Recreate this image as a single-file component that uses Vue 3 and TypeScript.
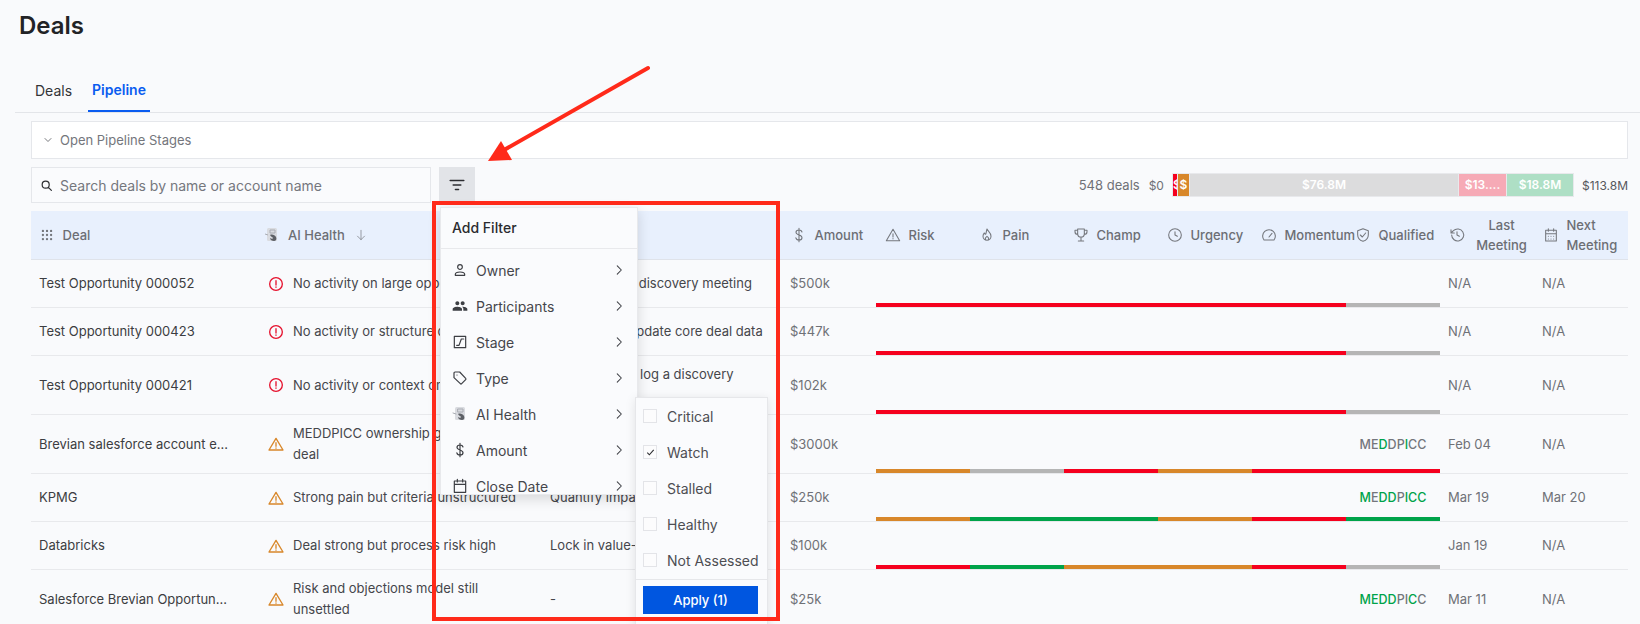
<script setup lang="ts">
const icons: Record<string, string> = {
  search: 'M10.5 4a6.5 6.5 0 1 0 0 13a6.5 6.5 0 0 0 0-13zM15.5 15.5L21 21',
  filter: 'M3 6h18M7 12h10M10 18h4',
  grip: 'M5 5h.01M12 5h.01M19 5h.01M5 12h.01M12 12h.01M19 12h.01M5 19h.01M12 19h.01M19 19h.01',
  sort: 'M12 4v16M6 14l6 6 6-6',
  dollar: 'M16.5 7.5C16 5.5 14 4.5 12 4.5 9.500 4.500 7.500 6 7.500 8c0 5 9 3 9 8 0 2-2 3.500-4.500 3.500-2.200 0-4.200-1-4.700-3.200M12 2v20',
  risk: 'M12 3.500L22 20.500H2ZM12 10v5M12 17.300v.5',
  pain: 'M12 3c1 3 6 5 6 11a6 6 0 0 1-12 0c0-2 1-4 2-5 .5 1 1 2 2 2 1-2 1-5 2-8zM12 20a2.500 2.500 0 0 1-2.500-2.500c0-2 2.500-3.500 2.500-3.500s2.500 1.500 2.500 3.500A2.500 2.500 0 0 1 12 20z',
  champ: 'M7 3h10v7a5 5 0 0 1-10 0zM7 5H3v2a4 4 0 0 0 4 4M17 5h4v2a4 4 0 0 1-4 4M12 15v5M8 21h8',
  clock: 'M12 2.500a9.500 9.500 0 1 0 0 19a9.500 9.500 0 0 0 0-19zM12 7v5l3.500 2',
  gauge: 'M4.500 19.500a9.500 9.500 0 1 1 15 0zM12 15l4.500-5.500',
  shield: 'M12 2.500l8 3v6c0 5-3.500 8.500-8 10-4.500-1.500-8-5-8-10v-6zM8 12l3 3 5-6',
  history: 'M4 12a9 9 0 1 0 2.600-6.400L3 9M3 4v5h5M12 7v5l3.500 2',
  calDots: 'M4 5h16v16H4zM4 10h16M8 2.500v4M16 2.500v4M8 14h.01M12 14h.01M16 14h.01M8 18h.01M12 18h.01M16 18h.01',
  person: 'M12 4a3.500 3.500 0 1 0 0 7a3.500 3.500 0 0 0 0-7zM5 20v-1.500c0-2 3-3.500 7-3.500s7 1.500 7 3.500V20z',
  stage: 'M3.500 3.500h17v17h-17zM7 17h3.500l3.500-9.500h3.500',
  tag: 'M3 4.500c0-.8.7-1.500 1.500-1.500h7l9 9.500c.6.6.6 1.400 0 2l-6 6c-.6.6-1.400.6-2 0L3 11.500zM7.500 7.500h.01',
  calendar: 'M3.500 4.500h17v17h-17zM3.500 9.500h17M8 2v4M16 2v4',
  right: 'M9 5l7 7-7 7',
  down: 'M6 9l6 6 6-6',
  critical: 'M12 2.500a9.500 9.500 0 1 0 0 19a9.500 9.500 0 0 0 0-19zM12 7v6.500M12 16.500v.5',
  watch: 'M12 3.500L22.500 21h-21zM12 10v5.500M12 18v.3',
  check: 'M5 12.500l4.500 4.500L19 6.500',
}
const group = 'M16 11c1.660 0 2.990-1.340 2.990-3S17.660 5 16 5c-1.660 0-3 1.340-3 3s1.340 3 3 3zm-8 0c1.660 0 2.990-1.340 2.990-3S9.660 5 8 5C6.340 5 5 6.340 5 8s1.340 3 3 3zm0 2c-2.330 0-7 1.170-7 3.500V19h14v-2.500c0-2.330-4.670-3.500-7-3.500zm8 0c-.290 0-.620.020-.970.050 1.160.840 1.970 1.970 1.970 3.450V19h6v-2.500c0-2.330-4.670-3.500-7-3.500z'

const R = '#f5001e', O = '#d8872a', G = '#00a34a', N = '#b5b5b5'

const metrics = [
  { icon: 'risk', label: 'Risk' },
  { icon: 'pain', label: 'Pain' },
  { icon: 'champ', label: 'Champ' },
  { icon: 'clock', label: 'Urgency' },
  { icon: 'gauge', label: 'Momentum' },
  { icon: 'shield', label: 'Qualified' },
]

interface Row {
  deal: string; health: 'critical' | 'watch'; reason: string; next: string; amount: string
  bars: [string, number][]; green: number[]; last: string; nextMeeting: string; tall: boolean
}
const rows: Row[] = [
  { deal: 'Test Opportunity 000052', health: 'critical', reason: 'No activity on large opportunity', next: 'Schedule first discovery meeting', amount: '$500k', bars: [[R, 5], [N, 1]], green: [], last: 'N/A', nextMeeting: 'N/A', tall: false },
  { deal: 'Test Opportunity 000423', health: 'critical', reason: 'No activity or structure defined', next: 'Assign lead, update core deal data', amount: '$447k', bars: [[R, 5], [N, 1]], green: [], last: 'N/A', nextMeeting: 'N/A', tall: false },
  { deal: 'Test Opportunity 000421', health: 'critical', reason: 'No activity or context on deal', next: 'Assign owner, log a discovery process', amount: '$102k', bars: [[R, 5], [N, 1]], green: [], last: 'N/A', nextMeeting: 'N/A', tall: true },
  { deal: 'Brevian salesforce account e...', health: 'watch', reason: 'MEDDPICC ownership gap on large deal', next: 'Assign clear owner', amount: '$3000k', bars: [[O, 1], [N, 1], [R, 1], [O, 1], [R, 2]], green: [2, 5], last: 'Feb 04', nextMeeting: 'N/A', tall: true },
  { deal: 'KPMG', health: 'watch', reason: 'Strong pain but criteria unstructured', next: 'Quantify impact', amount: '$250k', bars: [[O, 1], [G, 2], [O, 1], [R, 1], [G, 1]], green: [0, 2, 3, 5, 6, 7], last: 'Mar 19', nextMeeting: 'Mar 20', tall: false },
  { deal: 'Databricks', health: 'watch', reason: 'Deal strong but process risk high', next: 'Lock in value-based plan', amount: '$100k', bars: [[R, 1], [G, 1], [O, 2], [R, 1], [N, 1]], green: [], last: 'Jan 19', nextMeeting: 'N/A', tall: false },
  { deal: 'Salesforce Brevian Opportun...', health: 'watch', reason: 'Risk and objections model still unsettled', next: '-', amount: '$25k', bars: [[O, 6]], green: [0, 1, 2, 3, 6], last: 'Mar 11', nextMeeting: 'N/A', tall: true },
]
const word = 'MEDDPICC'.split('')
const showWord = (r: Row) => r.green.length > 0

const menu = [
  { icon: 'person', label: 'Owner' },
  { icon: 'group', label: 'Participants' },
  { icon: 'stage', label: 'Stage' },
  { icon: 'tag', label: 'Type' },
  { icon: 'ai', label: 'AI Health' },
  { icon: 'dollar', label: 'Amount' },
  { icon: 'calendar', label: 'Close Date' },
]
const options = [
  { label: 'Critical', on: false },
  { label: 'Watch', on: true },
  { label: 'Stalled', on: false },
  { label: 'Healthy', on: false },
  { label: 'Not Assessed', on: false },
]
const segments = [
  { label: '$', w: 4, c: '#f5001e' },
  { label: '$', w: 11, c: '#d8872a' },
  { label: '$76.8M', w: 268, c: '#dcdcdd' },
  { label: '$13....', w: 47, c: '#f6aab6' },
  { label: '$18.8M', w: 66, c: '#aedfc5' },
]
</script>

<template>
  <div class="page">
    <h1 class="title">Deals</h1>
    <nav class="tabs">
      <span class="tab">Deals</span>
      <span class="tab active">Pipeline</span>
    </nav>

    <section class="content">
      <div class="stages">
        <svg class="ico sm" viewBox="0 0 24 24"><path :d="icons.down" /></svg>
        <span>Open Pipeline Stages</span>
      </div>

      <div class="toolbar">
        <label class="search">
          <svg class="ico dark" viewBox="0 0 24 24"><path :d="icons.search" /></svg>
          <span>Search deals by name or account name</span>
        </label>
        <button class="filter-btn">
          <svg class="ico dark big" viewBox="0 0 24 24"><path :d="icons.filter" /></svg>
        </button>
        <div class="summary">
          <span class="count">548 deals</span>
          <span class="low">$0</span>
          <div class="stack">
            <span
              v-for="(s, i) in segments"
              :key="i"
              class="seg"
              :style="{ width: s.w + 'px', background: s.c }"
            >{{ s.label }}</span>
          </div>
          <span class="high">$113.8M</span>
        </div>
      </div>

      <div class="table">
        <div class="grid head">
          <div class="hcell">
            <svg class="ico grip" viewBox="0 0 24 24"><path :d="icons.grip" /></svg>
            <span>Deal</span>
          </div>
          <div class="hcell health-head">
            <svg class="ai" viewBox="0 0 16 16">
              <rect x="3" y="1" width="10" height="13" rx="1.500" fill="#d9dbe0" />
              <path d="M1 7l3 1M6 3h5v3H6z" stroke="#a9acb3" fill="none" />
              <path d="M6 8c2-1 5 0 6 2s0 4-2 4-4-1-4-3c1 1 3 1 3 0s-2-1-3-3z" fill="#5d6066" />
            </svg>
            <span>AI Health</span>
            <svg class="ico sort" viewBox="0 0 24 24"><path :d="icons.sort" /></svg>
          </div>
          <div class="hcell"></div>
          <div class="hcell">
            <svg class="ico" viewBox="0 0 24 24"><path :d="icons.dollar" /></svg>
            <span>Amount</span>
          </div>
          <div v-for="m in metrics" :key="m.label" class="hcell">
            <svg class="ico" viewBox="0 0 24 24"><path :d="icons[m.icon]" /></svg>
            <span>{{ m.label }}</span>
          </div>
          <div class="hcell">
            <svg class="ico" viewBox="0 0 24 24"><path :d="icons.history" /></svg>
            <span class="center">Last Meeting</span>
          </div>
          <div class="hcell">
            <svg class="ico" viewBox="0 0 24 24"><path :d="icons.calDots" /></svg>
            <span>Next Meeting</span>
          </div>
        </div>

        <div v-for="r in rows" :key="r.deal" class="grid row" :class="{ tall: r.tall }">
          <div class="cell deal">{{ r.deal }}</div>
          <div class="cell health">
            <svg class="hico" :class="r.health" viewBox="0 0 24 24"><path :d="icons[r.health]" /></svg>
            <span>{{ r.reason }}</span>
          </div>
          <div class="cell nextstep">{{ r.next }}</div>
          <div class="cell muted amount">{{ r.amount }}</div>
          <div class="bars">
            <i
              v-for="(b, i) in r.bars"
              :key="i"
              :style="{ background: b[0], flexGrow: b[1] }"
            ></i>
          </div>
          <div v-if="showWord(r)" class="cell word">
            <span
              v-for="(l, i) in word"
              :key="i"
              :class="{ on: r.green.includes(i) }"
            >{{ l }}</span>
          </div>
          <div class="cell muted lastm">{{ r.last }}</div>
          <div class="cell muted nextm">{{ r.nextMeeting }}</div>
        </div>
      </div>
    </section>

    <!-- floating filter menu -->
    <div class="menu">
      <div class="menu-title">Add Filter</div>
      <div v-for="m in menu" :key="m.label" class="menu-item">
        <svg v-if="m.icon === 'ai'" class="menu-ico" viewBox="0 0 16 16">
          <rect x="3" y="1" width="10" height="13" rx="1.500" fill="#d9dbe0" stroke="none" />
          <path d="M1 7l3 1M6 3h5v3H6z" stroke="#a9acb3" stroke-width="1" />
          <path d="M6 8c2-1 5 0 6 2s0 4-2 4-4-1-4-3c1 1 3 1 3 0s-2-1-3-3z" fill="#5d6066" stroke="none" />
        </svg>
        <svg v-else-if="m.icon === 'group'" class="menu-ico" viewBox="0 0 24 24">
          <path :d="group" fill="#3d3f44" stroke="none" />
        </svg>
        <svg v-else class="menu-ico" viewBox="0 0 24 24"><path :d="icons[m.icon]" /></svg>
        <span class="menu-label">{{ m.label }}</span>
        <svg class="menu-chev" viewBox="0 0 24 24"><path :d="icons.right" /></svg>
      </div>
    </div>

    <div class="sub">
      <div v-for="o in options" :key="o.label" class="opt">
        <span class="box">
          <svg v-if="o.on" viewBox="0 0 24 24"><path :d="icons.check" /></svg>
        </span>
        <span>{{ o.label }}</span>
      </div>
      <div class="sub-foot">
        <button class="apply">Apply (1)</button>
      </div>
    </div>

    <!-- annotation drawn on top of the screenshot -->
    <div class="mark"></div>
    <svg class="arrow" viewBox="0 0 200 120">
      <path d="M178 18L34 100" stroke="#ff2a1a" stroke-width="4" stroke-linecap="round" fill="none" />
      <path d="M18 111L31 91L42 110Z" fill="#ff2a1a" />
    </svg>
  </div>
</template>

<style>
html, body { overflow: hidden; background: #f9fafc; }
</style>

<style scoped>
.page {
  position: relative;
  width: 1640px;
  height: 624px;
  overflow: hidden;
  background: #f9fafc;
  font-family: Inter, "Liberation Sans", sans-serif;
  font-size: 13px;
  color: #3a3b3f;
}
.title {
  margin: 0;
  padding: 11px 0 0 19px;
  height: 70px;
  box-sizing: border-box;
  font-size: 24px;
  line-height: 30px;
  font-weight: 600;
  color: #222326;
}
.tabs {
  display: flex;
  gap: 12px;
  height: 43px;
  box-sizing: border-box;
  margin-left: 15px;
  padding-left: 16px;
  border-bottom: 1px solid #e3e5e9;
}
.tab {
  padding: 12px 4px 0;
  height: 42px;
  box-sizing: border-box;
  font-size: 14px;
  line-height: 18px;
  color: #333438;
}
.tab.active {
  padding-top: 11px;
  color: #0a5cf0;
  font-weight: 600;
  border-bottom: 2px solid #0a5cf0;
}
.content {
  padding: 8px 12px 0 31px;
}
.ico {
  width: 16px;
  height: 16px;
  flex: none;
  fill: none;
  stroke: #74777d;
  stroke-width: 1.600;
  stroke-linecap: round;
  stroke-linejoin: round;
}
.ico.sm { width: 12px; height: 12px; stroke: #55575c; }
.ico.dark { stroke: #2c2d31; stroke-width: 2.200; }
.ico.big { width: 18px; height: 18px; }
.ico.grip { stroke-width: 4; width: 14px; height: 14px; margin-right: 1px; }
.stages {
  display: flex;
  align-items: center;
  gap: 6px;
  height: 38px;
  box-sizing: border-box;
  padding-left: 10px;
  background: #fff;
  border: 1px solid #e5e7eb;
  font-size: 13px;
  color: #74767c;
}
.toolbar {
  display: flex;
  align-items: center;
  margin-top: 8px;
  height: 36px;
}
.search {
  display: flex;
  align-items: center;
  gap: 7px;
  width: 400px;
  height: 36px;
  box-sizing: border-box;
  padding-left: 8px;
  background: #fafbfd;
  border: 1px solid #e5e7eb;
  font-size: 14px;
  color: #75777d;
}
.search .ico { width: 13px; height: 13px; }
.filter-btn {
  width: 36px;
  height: 36px;
  margin-left: 8px;
  padding: 0;
  display: flex;
  align-items: center;
  justify-content: center;
  border: none;
  background: #e2e4e8;
}
.summary {
  margin-left: auto;
  display: flex;
  align-items: center;
  font-size: 13px;
  color: #6f7177;
}
.count { margin-right: 9px; }
.low { margin-right: 8px; font-size: 12px; }
.stack {
  display: flex;
  gap: 1px;
  height: 24px;
  box-sizing: border-box;
  padding: 1px;
  background: #e8e9ec;
}
.seg {
  display: block;
  overflow: hidden;
  text-align: center;
  font-size: 12px;
  font-weight: 600;
  line-height: 21px;
  color: #fff;
  white-space: nowrap;
}
.high { margin-left: 8px; font-size: 12px; color: #55575c; }
.grid {
  display: grid;
  grid-template-columns: 225px 286px 240px repeat(9, 94px);
}
.table { margin-top: 8px; }
.head {
  height: 49px;
  box-sizing: border-box;
  background: #e8f0fd;
  border-bottom: 1px solid #dfe3ea;
}
.hcell {
  display: flex;
  align-items: center;
  gap: 8px;
  padding-left: 8.500px;
  font-size: 13px;
  font-weight: 500;
  line-height: 20px;
  color: #6c6e74;
  white-space: nowrap;
}
.hcell span { white-space: normal; }
.hcell:nth-child(-n+10) span { white-space: nowrap; }
.hcell .center { text-align: center; width: 52px; margin-left: 3px; }
.ai { width: 16px; height: 16px; flex: none; margin-right: 0; }
.health-head { gap: 8px; padding-left: 8px; }
.sort { width: 14px; height: 14px; stroke-width: 1.200; margin-left: 1px; }
.row {
  height: 48px;
  box-sizing: border-box;
  border-bottom: 1px solid #e8e9ec;
}
.row.tall { height: 59px; }
.cell {
  grid-row: 1;
  display: flex;
  align-items: center;
  padding-left: 8px;
  line-height: 21px;
  min-width: 0;
}
.deal { grid-column: 1; color: #3c3d41; white-space: nowrap; }
.health { grid-column: 2; gap: 9px; padding-left: 12px; padding-right: 12px; color: #45464b; }
.hico {
  width: 16px;
  height: 16px;
  flex: none;
  fill: none;
  stroke-width: 2;
  stroke-linecap: round;
  stroke-linejoin: round;
}
.hico.critical { stroke: #e5112d; }
.hico.watch { stroke: #d8872a; }
.nextstep { grid-column: 3; color: #45464b; padding-right: 4px; }
.muted { color: #6f7177; }
.amount { grid-column: 4; }
.bars {
  grid-row: 1;
  grid-column: 5 / 11;
  align-self: end;
  display: flex;
  height: 4px;
}
.bars i { display: block; flex: 1 1 0; }
.word {
  grid-column: 10;
  justify-content: center;
  padding-left: 0;
  font-size: 12.500px;
  font-weight: 500;
  color: #74767c;
}
.word .on { color: #00a34a; }
.lastm { grid-column: 11; }
.nextm { grid-column: 12; }

.menu {
  position: absolute;
  left: 440px;
  top: 207px;
  width: 198px;
  height: 288px;
  overflow: hidden;
  background: #fafbfd;
  border: 1px solid #e8e9ec;
  box-sizing: border-box;
  box-shadow: 0 4px 12px rgba(0, 0, 0, .14);
}
.menu-title {
  height: 41px;
  box-sizing: border-box;
  padding: 11px 11px 0;
  font-size: 14px;
  line-height: 18px;
  font-weight: 500;
  color: #2a2b2f;
  border-bottom: 1px solid #e8e9ec;
  margin-bottom: 3px;
}
.menu-item {
  display: flex;
  align-items: center;
  height: 36px;
  padding: 0 11px;
  font-size: 14px;
  color: #45464b;
}
.menu-ico {
  width: 16px;
  height: 16px;
  flex: none;
  fill: none;
  stroke: #3d3f44;
  stroke-width: 1.800;
  stroke-linecap: round;
  stroke-linejoin: round;
  margin-right: 8px;
}
.menu-label { flex: 1; }
.menu-chev {
  width: 14px;
  height: 14px;
  fill: none;
  stroke: #3d3f44;
  stroke-width: 1.800;
  stroke-linecap: round;
  stroke-linejoin: round;
}
.sub {
  position: absolute;
  left: 635px;
  top: 397px;
  width: 133px;
  height: 240px;
  box-sizing: border-box;
  background: #fafbfd;
  border: 1px solid #e6e7ea;
  box-shadow: 0 2px 10px rgba(0, 0, 0, .10);
}
.opt {
  display: flex;
  align-items: center;
  gap: 10px;
  height: 36px;
  padding-left: 7px;
  font-size: 14px;
  color: #4d4e53;
  white-space: nowrap;
}
.box {
  width: 14px;
  height: 14px;
  box-sizing: border-box;
  flex: none;
  display: flex;
  align-items: center;
  justify-content: center;
  border: 1px solid #e3e4e8;
  background: #fcfcfd;
}
.box svg {
  width: 11px;
  height: 11px;
  fill: none;
  stroke: #2c2d31;
  stroke-width: 2.400;
}
.sub-foot {
  border-top: 1px solid #e6e7ea;
  margin-top: 1px;
  padding: 6px 8px 0 7px;
}
.apply {
  display: block;
  width: 115px;
  height: 28px;
  padding: 0;
  border: none;
  background: #0056e0;
  color: #fff;
  font-family: inherit;
  font-size: 13px;
  font-weight: 500;
}
.mark {
  position: absolute;
  left: 432px;
  top: 201px;
  width: 348px;
  height: 420px;
  box-sizing: border-box;
  border: 4px solid #ff2a1a;
  pointer-events: none;
}
.arrow {
  position: absolute;
  left: 470px;
  top: 50px;
  width: 200px;
  height: 120px;
  pointer-events: none;
}
</style>
